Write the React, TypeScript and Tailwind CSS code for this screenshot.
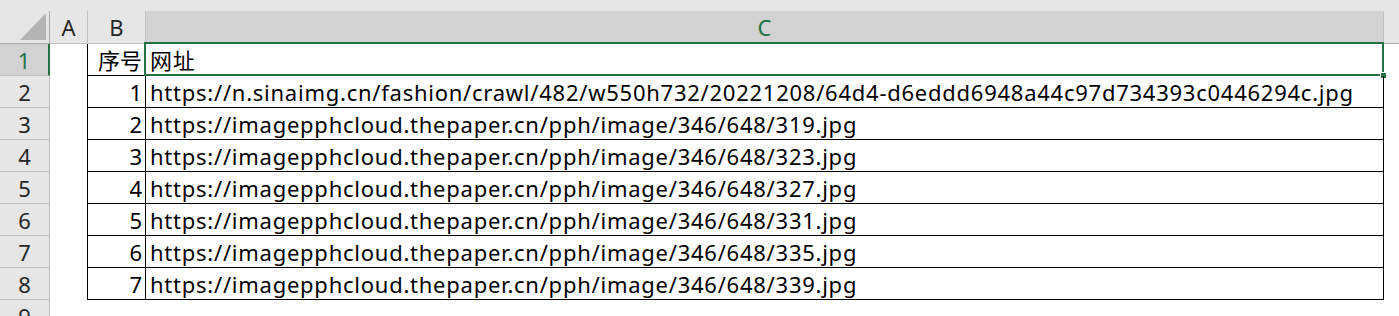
import React from 'react';

const urls = [
  'https://n.sinaimg.cn/fashion/crawl/482/w550h732/20221208/64d4-d6eddd6948a44c97d734393c0446294c.jpg',
  'https://imagepphcloud.thepaper.cn/pph/image/346/648/319.jpg',
  'https://imagepphcloud.thepaper.cn/pph/image/346/648/323.jpg',
  'https://imagepphcloud.thepaper.cn/pph/image/346/648/327.jpg',
  'https://imagepphcloud.thepaper.cn/pph/image/346/648/331.jpg',
  'https://imagepphcloud.thepaper.cn/pph/image/346/648/335.jpg',
  'https://imagepphcloud.thepaper.cn/pph/image/346/648/339.jpg',
];

export default function App() {
  const rows = [1, 2, 3, 4, 5, 6, 7, 8, 9];

  return (
    <div className="w-[1399px] h-[316px] overflow-hidden bg-white text-black text-[22px] leading-none font-[Noto_Sans,Noto_Sans_CJK_SC,sans-serif]">
      <div className="grid grid-cols-[50px_38px_58px_1238px_1fr] grid-rows-[11px_33px_repeat(9,32px)]">
        {/* top band */}
        <div className="col-span-5 bg-[#e6e6e6]" />

        {/* column headers */}
        <div className="relative bg-[#e6e6e6] border-r border-b border-[#ababab]">
          <svg className="absolute right-[3px] bottom-[3px]" width="26" height="27" viewBox="0 0 26 27">
            <polygon points="26,0 26,27 0,27" fill="#b4b4b4" />
          </svg>
        </div>
        <div className="flex items-center justify-center bg-[#e6e6e6] border-r border-b border-[#bfbfbf] text-[#262626]">A</div>
        <div className="flex items-center justify-center bg-[#e6e6e6] border-r border-b border-[#bfbfbf] text-[#262626]">B</div>
        <div className="flex items-center justify-center bg-[#d2d2d2] border-r border-[#bfbfbf] border-b-2 border-b-[#217346] text-[#217346]">C</div>
        <div className="bg-[#e6e6e6] border-b border-[#ababab]" />

        {rows.map((r) => {
          const active = r === 1;
          const inTable = r <= 8;
          return (
            <React.Fragment key={r}>
              <div
                className={
                  active
                    ? 'flex items-center justify-center bg-[#d2d2d2] border-r-2 border-r-[#217346] border-b border-b-[#bfbfbf] text-[#217346]'
                    : 'flex items-center justify-center bg-[#e6e6e6] border-r border-b border-[#bfbfbf] text-[#262626]'
                }
              >
                {r}
              </div>
              <div className={inTable ? 'border-r border-black' : ''} />
              <div className={inTable ? 'flex items-center justify-end pr-[3px] pt-[1px] border-r border-b border-black' : ''}>
                {r === 1 ? '序号' : inTable ? r - 1 : ''}
              </div>
              <div
                className={
                  inTable
                    ? 'relative flex items-center pl-[4px] pt-[1px] border-r border-b border-black whitespace-nowrap tracking-[0.75px]'
                    : ''
                }
              >
                {r === 1 ? '网址' : inTable ? urls[r - 2] : ''}
                {active && (
                  <>
                    <div className="absolute -left-[2px] -top-[2px] -right-[1px] -bottom-[1px] border-2 border-[#217346]" />
                    <div className="absolute -right-[4px] -bottom-[4px] w-[7px] h-[7px] bg-[#217346] border border-white" />
                  </>
                )}
              </div>
              <div />
            </React.Fragment>
          );
        })}
      </div>
    </div>
  );
}
